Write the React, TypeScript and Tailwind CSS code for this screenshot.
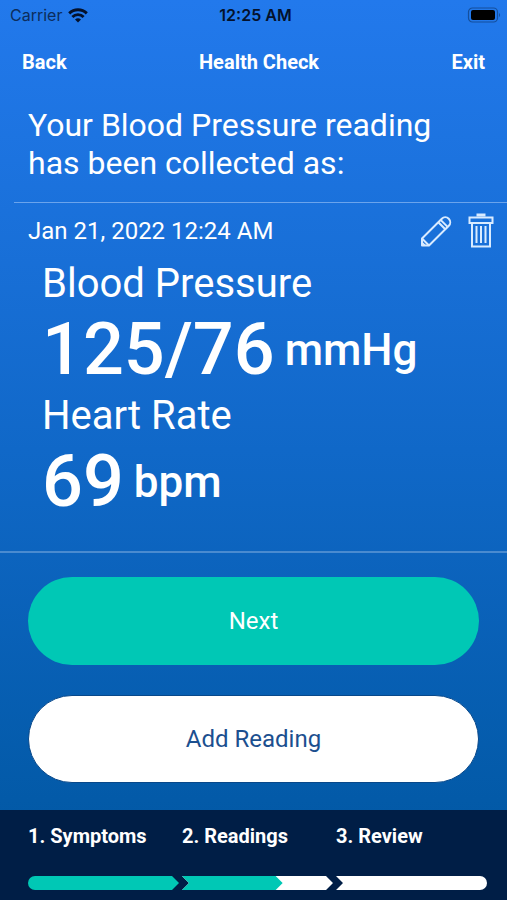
type Reading = { label: string; value: string; unit: string };

const readings: Reading[] = [
  { label: "Blood Pressure", value: "125/76", unit: "mmHg" },
  { label: "Heart Rate", value: "69", unit: "bpm" },
];

function WifiIcon() {
  return (
    <svg viewBox="0 0 20 15" className="h-[15px] w-5" fill="none" stroke="#04112b" strokeWidth="2.9" aria-hidden="true">
      <path d="M1.200 5.400a12.600 12.600 0 0 1 17.600 0" />
      <path d="M4.400 9a7.900 7.900 0 0 1 11.200 0" />
      <path d="M10 14.600 7 11.600a4.300 4.300 0 0 1 6 0z" fill="#04112b" stroke="none" />
    </svg>
  );
}

function BatteryIcon() {
  return (
    <svg viewBox="0 0 34 16" className="h-4 w-[34px]" aria-hidden="true">
      <rect x="1.500" y="1" width="29" height="14" rx="4" fill="none" stroke="#154f9c" strokeWidth="1.2" />
      <rect x="4" y="3" width="24" height="10" rx="2" fill="#000" />
      <path d="M32 6v4c1.400-.5 1.400-3.500 0-4z" fill="#154f9c" />
    </svg>
  );
}

function PencilIcon() {
  return (
    <svg viewBox="0 0 32 32" className="size-8" fill="none" stroke="#d9ebff" strokeWidth="2" strokeLinejoin="round" aria-hidden="true">
      <path d="M2 30.500v-7L21.800 3.700a4.950 4.950 0 0 1 7 7L9 30.500z" />
      <path d="M2 23.500 9 30.500M18.300 7.200l7 7M20.600 4.900l7 7M2 27.800l2.700 2.700" />
    </svg>
  );
}

function TrashIcon() {
  return (
    <svg viewBox="0 0 26 36" className="h-9 w-[26px]" fill="none" stroke="#d9ebff" strokeWidth="2" aria-hidden="true">
      <path d="M8.500 2h9" strokeWidth="3" />
      <rect x="1.500" y="4.500" width="23" height="5.500" />
      <path d="M4 10v23.500h18V10" />
      <path d="M8.500 13v17M13 13v17M17.500 13v17" />
    </svg>
  );
}

export default function App() {
  return (
    <div className="flex min-h-screen flex-col bg-linear-to-b from-[#2279ec] via-[#1068c8] to-[#00569f] font-['Roboto',sans-serif] text-white">
      <div className="grid h-[30px] grid-cols-3 items-center pr-[6px] pl-[10px] font-['Inter',sans-serif] text-base text-[#04112b]">
        <div className="flex items-center gap-[6px] text-[#0c2d5c]">
          <span>Carrier</span>
          <WifiIcon />
        </div>
        <span className="text-center font-semibold">12:25 AM</span>
        <div className="flex justify-end">
          <BatteryIcon />
        </div>
      </div>

      <header className="flex h-16 items-center justify-between px-[22px] text-xl font-bold">
        <button type="button">Back</button>
        <h1>Health Check</h1>
        <button type="button">Exit</button>
      </header>

      <main className="flex flex-1 flex-col">
        <p className="px-7 pt-3 text-[32px] leading-[38px]">
          Your Blood Pressure reading
          <br />
          has been collected as:
        </p>

        <section className="mt-5 ml-[14px] flex-1 border-t border-[#6ba4ec]">
          <div className="flex h-14 items-center pr-[13px] pl-[14px]">
            <time className="flex-1 text-2xl" dateTime="2022-01-21T00:24">Jan 21, 2022 12:24 AM</time>
            <div className="flex items-center gap-4">
              <button type="button" aria-label="Edit reading"><PencilIcon /></button>
              <button type="button" aria-label="Delete reading"><TrashIcon /></button>
            </div>
          </div>
          <dl className="px-7 pt-px">
            {readings.map((r) => (
              <div key={r.label}>
                <dt className="text-[40px] leading-[48px]">{r.label}</dt>
                <dd className="flex h-[84px] items-center gap-[10px] font-medium">
                  <span className="text-[72px] leading-[84px]">{r.value}</span>
                  <span className="text-[44px] leading-[84px]">{r.unit}</span>
                </dd>
              </div>
            ))}
          </dl>
        </section>

        <div className="flex flex-col gap-[30px] border-t-2 border-[#4a8bd0] px-7 pt-6 pb-[27px] text-2xl">
          <button type="button" className="h-[88px] rounded-full bg-[#00c8b5]">Next</button>
          <button type="button" className="h-[88px] rounded-full border border-[#08488a] bg-white text-[#1c4f8f]">Add Reading</button>
        </div>
      </main>

      <footer className="h-[90px] bg-[#001e46] pt-3 pr-5 pl-7">
        <ol className="grid grid-cols-3 gap-[3px] text-xl leading-7 font-bold whitespace-nowrap">
          <li>
            1. Symptoms
            <div className="mt-[26px] h-[14px] rounded-l-full bg-[#00c8b5] [clip-path:polygon(0_0,calc(100%-7px)_0,100%_50%,calc(100%-7px)_100%,0_100%)]" />
          </li>
          <li>
            2. Readings
            <div className="mt-[26px] h-[14px] bg-white [clip-path:polygon(0_0,calc(100%-7px)_0,100%_50%,calc(100%-7px)_100%,0_100%,7px_50%)]">
              <div className="h-full w-2/3 bg-[#00c8b5] [clip-path:polygon(0_0,calc(100%-7px)_0,100%_50%,calc(100%-7px)_100%,0_100%)]" />
            </div>
          </li>
          <li>
            3. Review
            <div className="mt-[26px] h-[14px] rounded-r-full bg-white [clip-path:polygon(0_0,100%_0,100%_100%,0_100%,7px_50%)]" />
          </li>
        </ol>
      </footer>
    </div>
  );
}
